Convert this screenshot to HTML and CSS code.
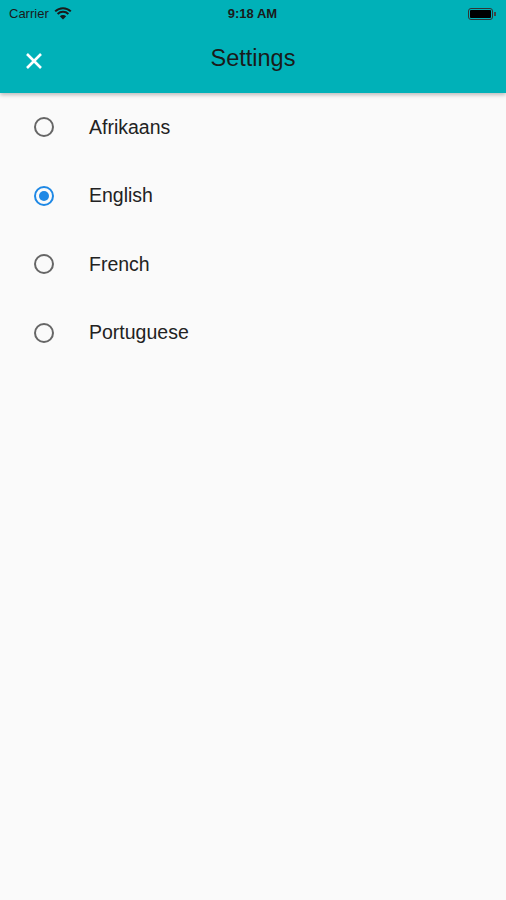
FILE: index.html
```html
<!DOCTYPE html>
<html lang="en">

<head>
    <meta charset="UTF-8">
    <meta name="viewport" content="width=device-width, initial-scale=1.0">
    <title>Settings</title>
    <link rel="stylesheet" href="styles.css">
</head>

<body>
    <div class="header">
        <div class="status">
            <div class="status-left">
                <span>Carrier</span>
                <svg class="wifi" width="18" height="13" viewBox="0 0 18 13">
                    <path d="M9 12.5 L5.8 9.2 A4.6 4.6 0 0 1 12.2 9.2 Z" fill="#1a1a1a" />
                    <path d="M3.6 7 A7.7 7.7 0 0 1 14.4 7" stroke="#1a1a1a" stroke-width="2" fill="none" />
                    <path d="M1.2 4.4 A11 11 0 0 1 16.8 4.4" stroke="#1a1a1a" stroke-width="2" fill="none" />
                </svg>
            </div>
            <div class="time">9:18 AM</div>
            <div class="status-right">
                <div class="battery"><div class="battery-fill"></div></div>
                <div class="battery-tip"></div>
            </div>
        </div>
        <div class="toolbar">
            <svg class="close" width="18" height="18" viewBox="0 0 18 18">
                <path d="M2 2 L16 16 M16 2 L2 16" stroke="#ffffff" stroke-width="2.6" />
            </svg>
            <div class="title">Settings</div>
        </div>
    </div>
    <div class="list">
        <div class="row">
            <span class="radio"></span>
            <span class="label">Afrikaans</span>
        </div>
        <div class="row">
            <span class="radio checked"></span>
            <span class="label">English</span>
        </div>
        <div class="row">
            <span class="radio"></span>
            <span class="label">French</span>
        </div>
        <div class="row">
            <span class="radio"></span>
            <span class="label">Portuguese</span>
        </div>
    </div>
</body>

</html>
```

FILE: styles.css
```css
body {
    margin: 0;
    background: #fafafa;
    font-family: "Liberation Sans", Arial, sans-serif;
    height: 900px;
}

.header {
    background: #00b1b8;
    height: 93px;
    box-shadow: 0 2px 4px rgba(0, 0, 0, 0.25);
    position: relative;
}

.status {
    height: 27px;
    display: flex;
    align-items: center;
    justify-content: space-between;
    padding: 0 9px;
    font-size: 13px;
    color: #1a1a1a;
}

.status-left {
    display: flex;
    align-items: center;
    gap: 5px;
    width: 120px;
}

.time {
    font-weight: bold;
    font-size: 13px;
}

.status-right {
    width: 120px;
    display: flex;
    justify-content: flex-end;
    align-items: center;
    padding-right: 1px;
}

.battery {
    width: 21px;
    height: 8px;
    border: 1px solid #333;
    border-radius: 3px;
    padding: 1px;
}

.battery-fill {
    background: #000;
    height: 100%;
    border-radius: 1px;
}

.battery-tip {
    width: 2px;
    height: 4px;
    background: #444;
    margin-left: 1px;
}

.toolbar {
    height: 66px;
    display: flex;
    align-items: center;
    padding: 0 25px;
    position: relative;
}

.close {
    margin-top: 2px;
}

.title {
    position: absolute;
    left: 0;
    right: 0;
    text-align: center;
    font-size: 23.5px;
    color: #1a1a1a;
    pointer-events: none;
    margin-top: -4px;
}

.row {
    height: 68.5px;
    display: flex;
    align-items: center;
    padding-left: 34px;
}

.radio {
    width: 16px;
    height: 16px;
    border: 2px solid #666;
    border-radius: 50%;
    box-sizing: content-box;
    position: relative;
}

.radio.checked {
    border-color: #1e88e5;
}

.radio.checked::after {
    content: '';
    position: absolute;
    left: 3px;
    top: 3px;
    width: 10px;
    height: 10px;
    border-radius: 50%;
    background: #1e88e5;
}

.label {
    margin-left: 35px;
    font-size: 19.5px;
    color: #222;
}
```
